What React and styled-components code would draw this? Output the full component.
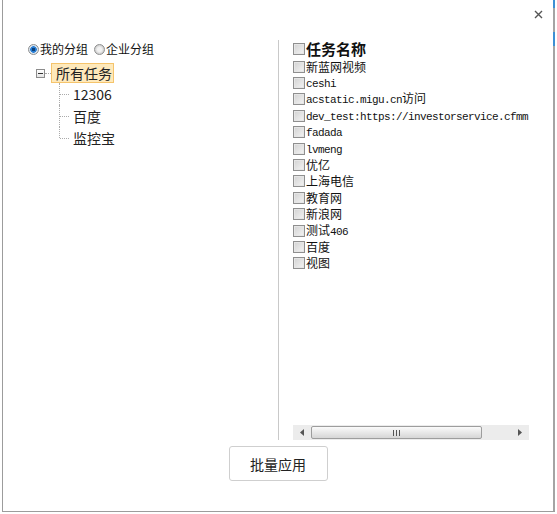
import React from 'react';
import styled, { createGlobalStyle } from 'styled-components';

const GlobalStyle = createGlobalStyle`
  html, body {
    margin: 0;
    padding: 0;
    background: #fff;
  }
  body {
    font-family: "Noto Sans CJK SC", "Liberation Sans", sans-serif;
    color: #222;
  }
`;

const tasks = [
  '新蓝网视频',
  'ceshi',
  'acstatic.migu.cn访问',
  'dev_test:https://investorservice.cfmm',
  'fadada',
  'lvmeng',
  '优亿',
  '上海电信',
  '教育网',
  '新浪网',
  '测试406',
  '百度',
  '视图',
];

const groups = ['12306', '百度', '监控宝'];

const Frame = styled.div`
  box-sizing: border-box;
  margin-left: 2px;
  width: 553px;
  height: 512px;
  border-left: 1px solid #9c9c9c;
  border-bottom: 1px solid #9c9c9c;
  padding-right: 2px;
  display: flex;
  flex-direction: column;
  background:
    linear-gradient(
      to bottom,
      #3d8fd3 0 8px,
      #a4a4a4 8px 32px,
      #3d8fd3 32px 46px,
      #a4a4a4 46px
    )
    right top / 2px 100% no-repeat,
    #fff;
`;

const TitleBar = styled.div`
  height: 40px;
  box-sizing: border-box;
  display: flex;
  justify-content: flex-end;
  padding: 10px 10px 0 0;
`;

const CloseButton = styled.button`
  width: 9px;
  height: 9px;
  padding: 0;
  border: 0;
  background: none;
  cursor: pointer;
  display: flex;
`;

const Body = styled.div`
  display: flex;
  height: 400px;
`;

const LeftPanel = styled.div`
  box-sizing: border-box;
  width: 276px;
  border-right: 1px solid #c9c9c9;
  padding: 3px 0 0 25px;
`;

const RadioRow = styled.div`
  display: flex;
  align-items: center;
  gap: 6px;
  height: 12px;
  font-family: "Noto Sans CJK SC", sans-serif;
  font-size: 12px;
  line-height: 12px;
  color: #111;
`;

const RadioLabel = styled.label`
  display: flex;
  align-items: center;
  gap: 1px;
  cursor: pointer;
`;

const RadioDot = styled.span`
  box-sizing: border-box;
  width: 11px;
  height: 11px;
  border-radius: 50%;
  border: 1px solid #8e8f8f;
  background: ${p =>
    p.$checked
      ? 'radial-gradient(circle, #0b3f7a 0 1.5px, #2a7fd4 2px 3px, #d9e4ef 3.5px)'
      : 'radial-gradient(circle, #f2f2f2 0 2px, #cfcfcf 4.5px)'};
`;

const Tree = styled.div`
  margin: 8px 0 0 8px;
`;

const RootRow = styled.div`
  display: flex;
  align-items: center;
  height: 20px;
`;

const Toggle = styled.span`
  box-sizing: border-box;
  width: 9px;
  height: 9px;
  border: 1px solid #8c8c8c;
  background: linear-gradient(#fff, #e4e4e4);
  display: flex;
  align-items: center;
  justify-content: center;
  &::after {
    content: '';
    width: 5px;
    height: 1px;
    background: #333;
  }
`;

const Connector = styled.span`
  width: 6px;
  border-top: 1px dotted #a8a8a8;
`;

const RootLabel = styled.span`
  box-sizing: border-box;
  height: 20px;
  padding: 0 1px 0 4px;
  display: flex;
  align-items: center;
  background: #fee9bb;
  border: 1px solid #f5c46c;
  font-size: 14px;
  line-height: 18px;
  color: #222;
`;

const Children = styled.div`
  margin-left: 23px;
`;

const ChildRow = styled.div`
  position: relative;
  height: 22px;
  padding-left: 14px;
  display: flex;
  align-items: center;
  font-size: 14px;
  line-height: 20px;
  color: #222;
  &::before {
    content: '';
    position: absolute;
    left: 0;
    top: 0;
    height: ${p => (p.$last ? '11px' : '22px')};
    border-left: 1px dotted #ababab;
  }
  &::after {
    content: '';
    position: absolute;
    left: 1px;
    top: 11px;
    width: 9px;
    border-top: 1px dotted #ababab;
  }
`;

const RightPanel = styled.div`
  flex: 1;
  min-width: 0;
  display: flex;
  flex-direction: column;
  padding: 0 24px 0 14px;
`;

const TaskList = styled.div`
  flex: 1;
  margin-top: -2px;
  overflow-x: clip;
`;

const TaskRow = styled.div`
  display: flex;
  align-items: center;
  height: 16.4px;
  line-height: 15px;
  white-space: nowrap;
  font-family: "Noto Sans CJK SC", sans-serif;
  font-size: 12px;
  color: #111;
`;

const HeadRow = styled(TaskRow)`
  height: 22px;
  margin-bottom: -1.5px;
  line-height: 22px;
  font-size: 15px;
  font-weight: 700;
`;

const TaskLabel = styled.span`
  line-height: 14px;
`;

const Box = styled.span`
  flex: none;
  box-sizing: border-box;
  width: 12px;
  height: 12px;
  margin-right: 1px;
  border: 1px solid #8f8f8f;
  background: linear-gradient(135deg, #d2d2d2, #f4f4f4);
  box-shadow: inset 0 0 0 1px #e6e6e6;
`;

const Latin = styled.span`
  font-family: "Liberation Mono", monospace;
  font-size: 11px;
  letter-spacing: -0.6px;
`;

const ScrollTrack = styled.div`
  height: 15px;
  display: flex;
  align-items: stretch;
  background: #ececec;
  flex: none;
`;

const Arrow = styled.span`
  width: 18px;
  display: flex;
  align-items: center;
  justify-content: center;
`;

const Thumb = styled.span`
  box-sizing: border-box;
  width: 171px;
  margin: 1px 0;
  border: 1px solid #9d9d9d;
  border-radius: 2px;
  background: linear-gradient(#fbfbfb, #e8e8e8 50%, #d6d6d6);
  display: flex;
  align-items: center;
  justify-content: center;
`;

const Spacer = styled.span`
  flex: 1;
`;

const Footer = styled.div`
  display: flex;
  justify-content: center;
  padding-top: 6px;
`;

const ApplyButton = styled.button`
  width: 99px;
  height: 35px;
  border: 1px solid #cfcfcf;
  border-radius: 3px;
  background: #fff;
  font-family: "Noto Sans CJK SC", sans-serif;
  font-size: 14px;
  color: #222;
  cursor: pointer;
`;

// split a label into cjk / ascii runs so the ascii gets the narrow mono face
function TaskText({ text }) {
  const parts = text.match(/[\x00-\x7f]+|[^\x00-\x7f]+/g) || [];
  return (
    <TaskLabel>
      {parts.map((part, i) =>
        /^[\x00-\x7f]+$/.test(part) ? <Latin key={i}>{part}</Latin> : <span key={i}>{part}</span>
      )}
    </TaskLabel>
  );
}

export default function App() {
  return (
    <>
      <GlobalStyle />
      <Frame>
        <TitleBar>
          <CloseButton aria-label="close">
            <svg width="9" height="9" viewBox="0 0 9 9">
              <path d="M1 1L8 8M8 1L1 8" stroke="#555" strokeWidth="1.4" />
            </svg>
          </CloseButton>
        </TitleBar>

        <Body>
          <LeftPanel>
            <RadioRow>
              <RadioLabel>
                <RadioDot $checked />
                我的分组
              </RadioLabel>
              <RadioLabel>
                <RadioDot />
                企业分组
              </RadioLabel>
            </RadioRow>

            <Tree>
              <RootRow>
                <Toggle />
                <Connector />
                <RootLabel>所有任务</RootLabel>
              </RootRow>
              <Children>
                {groups.map((g, i) => (
                  <ChildRow key={g} $last={i === groups.length - 1}>
                    {g}
                  </ChildRow>
                ))}
              </Children>
            </Tree>
          </LeftPanel>

          <RightPanel>
            <TaskList>
              <HeadRow>
                <Box />
                任务名称
              </HeadRow>
              {tasks.map(t => (
                <TaskRow key={t}>
                  <Box />
                  <TaskText text={t} />
                </TaskRow>
              ))}
            </TaskList>
            <ScrollTrack>
              <Arrow>
                <svg width="4" height="7" viewBox="0 0 4 7">
                  <path d="M4 0L0 3.5L4 7Z" fill="#555" />
                </svg>
              </Arrow>
              <Thumb>
                <svg width="7" height="6" viewBox="0 0 7 6">
                  <path d="M0.5 0V6M3.5 0V6M6.5 0V6" stroke="#555" strokeWidth="1" />
                </svg>
              </Thumb>
              <Spacer />
              <Arrow>
                <svg width="4" height="7" viewBox="0 0 4 7">
                  <path d="M0 0L4 3.5L0 7Z" fill="#555" />
                </svg>
              </Arrow>
            </ScrollTrack>
          </RightPanel>
        </Body>

        <Footer>
          <ApplyButton>批量应用</ApplyButton>
        </Footer>
      </Frame>
    </>
  );
}
